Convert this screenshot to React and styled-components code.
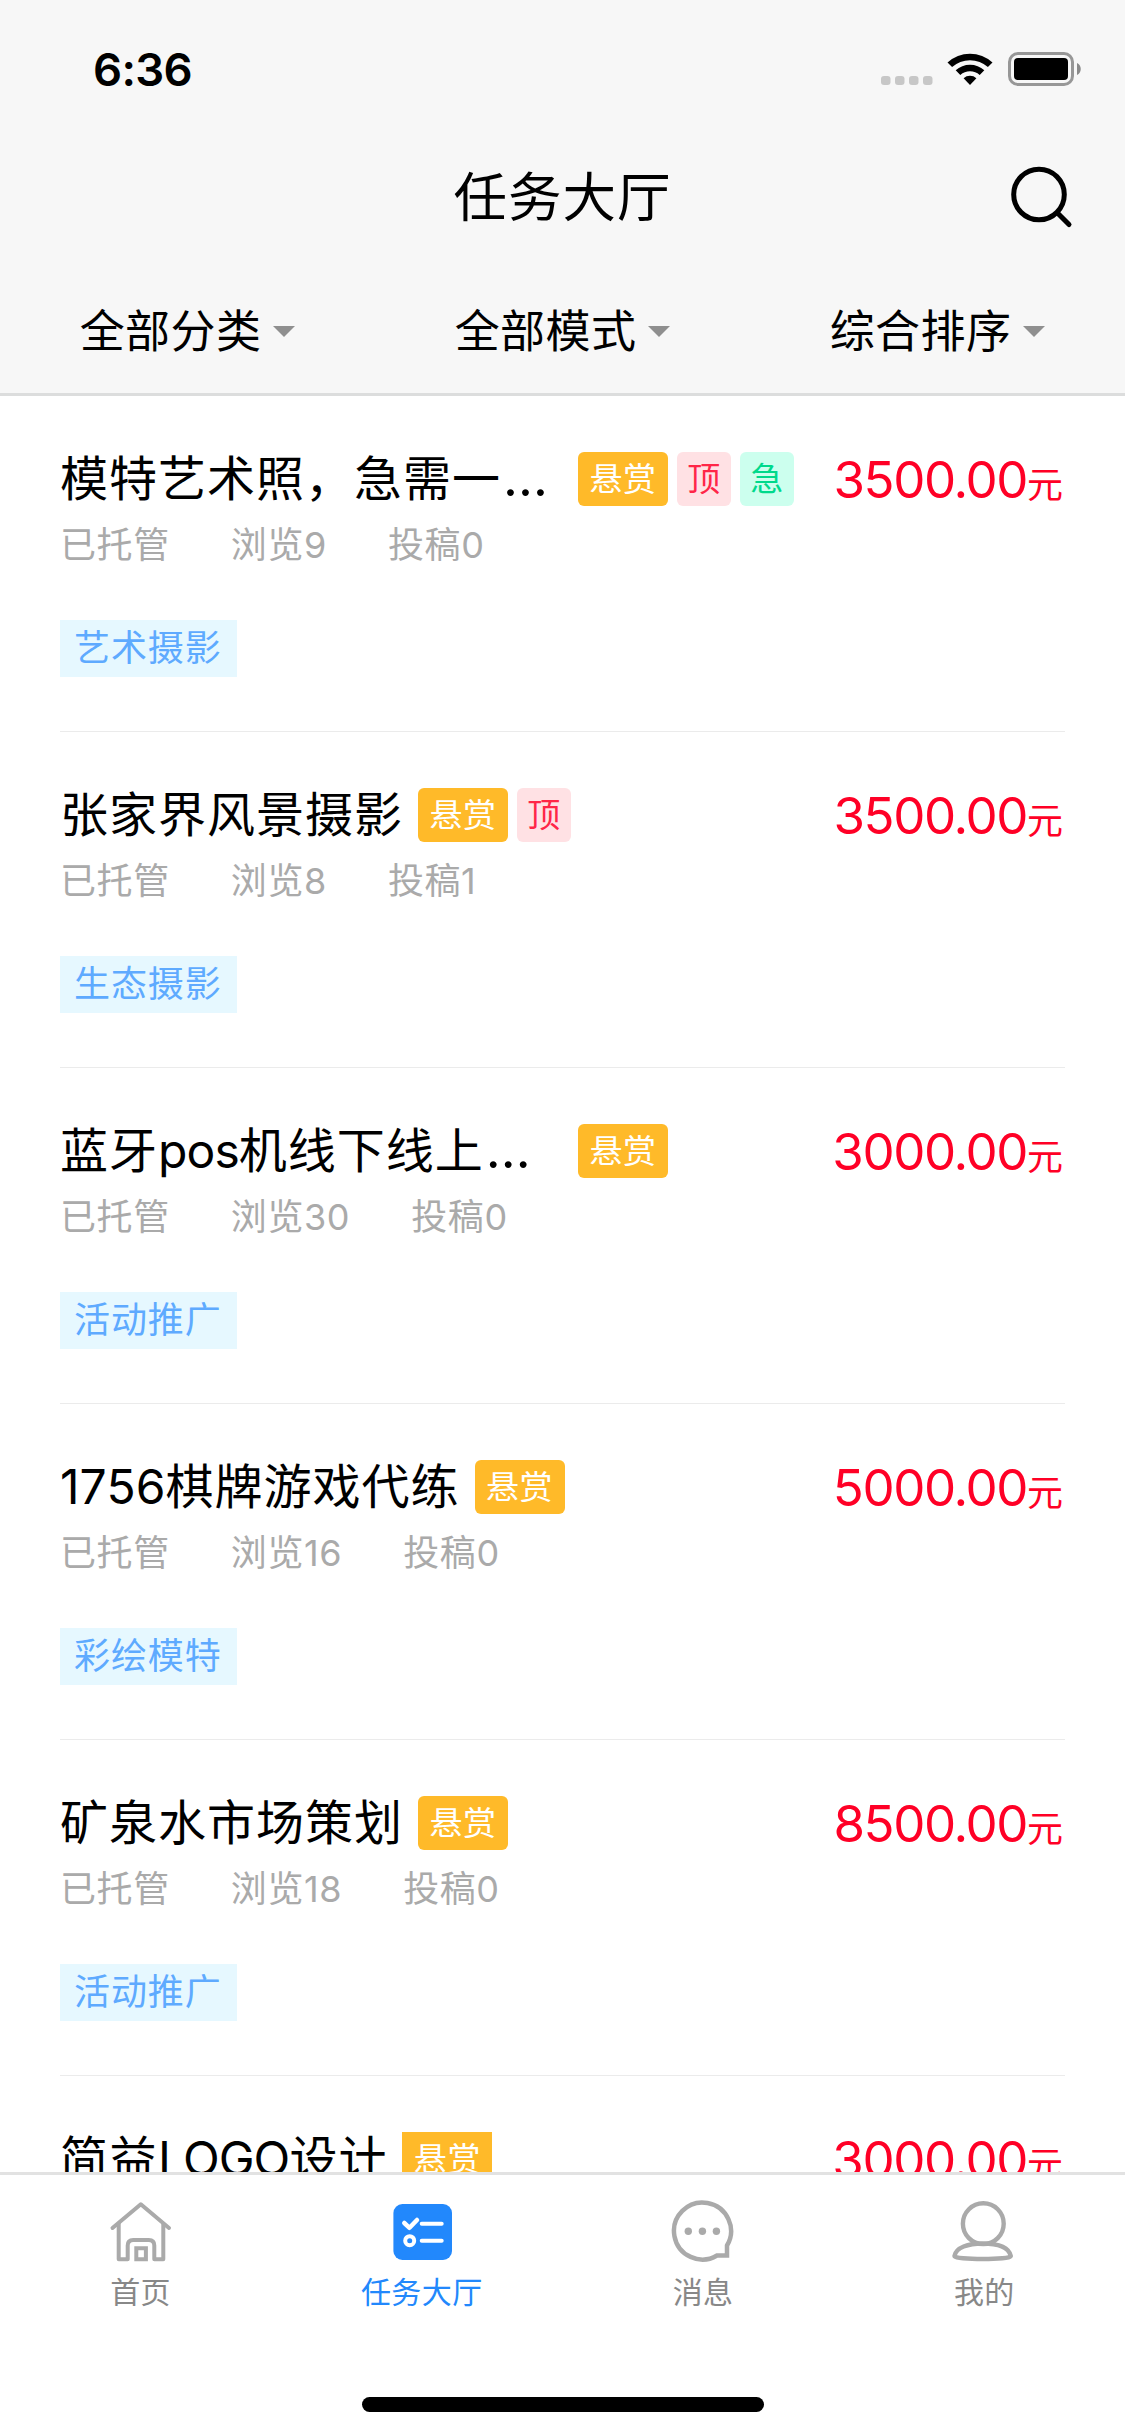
import React from "react";
import styled, { createGlobalStyle } from "styled-components";

const GlobalStyle = createGlobalStyle`
  * {
    box-sizing: border-box;
  }

  body {
    margin: 0;
    background: #fff;
    font-family: Inter, "Noto Sans CJK SC", sans-serif;
    color: #000;
  }
`;

const blue = "#2288fc";
const iconGrey = "#aaaaaa";

const TASKS = [
  {
    title: "模特艺术照，急需一…",
    badges: ["reward", "top", "urgent"],
    views: 9,
    entries: 0,
    tag: "艺术摄影",
    price: "3500.00",
  },
  {
    title: "张家界风景摄影",
    badges: ["reward", "top"],
    views: 8,
    entries: 1,
    tag: "生态摄影",
    price: "3500.00",
  },
  {
    title: "蓝牙pos机线下线上…",
    badges: ["reward"],
    views: 30,
    entries: 0,
    tag: "活动推广",
    price: "3000.00",
  },
  {
    title: "1756棋牌游戏代练",
    badges: ["reward"],
    views: 16,
    entries: 0,
    tag: "彩绘模特",
    price: "5000.00",
  },
  {
    title: "矿泉水市场策划",
    badges: ["reward"],
    views: 18,
    entries: 0,
    tag: "活动推广",
    price: "8500.00",
  },
  {
    title: "简益LOGO设计",
    badges: ["reward"],
    square: true,
    price: "3000.00",
  },
];

const BADGES = {
  reward: { label: "悬赏", color: "#ffffff", background: "#ffba29", width: 90 },
  top: { label: "顶", color: "#ff2647", background: "#ffe1e4", width: 54 },
  urgent: { label: "急", color: "#00d98b", background: "#ccffee", width: 54 },
};

const Screen = styled.div`
  width: 1125px;
  height: 2436px;
  display: flex;
  flex-direction: column;
  overflow: hidden;
  background: #fff;
`;

const Header = styled.header`
  height: 396px;
  flex: none;
  display: flex;
  flex-direction: column;
  background: #f7f7f7;
  border-bottom: 3px solid #dcdddd;
`;

const StatusBar = styled.div`
  height: 132px;
  display: flex;
  align-items: center;
  justify-content: space-between;
  padding: 6px 44px 0 93px;
`;

const Time = styled.span`
  font-size: 45.5px;
  font-weight: 600;
  letter-spacing: -0.7px;
`;

const StatusIcons = styled.div`
  display: flex;
  align-items: center;

  svg {
    display: block;
  }
`;

const TitleBar = styled.div`
  height: 132px;
  display: grid;
  grid-template-columns: 1fr auto 1fr;
  align-items: center;
  padding: 0 51px;
`;

const PageTitle = styled.h1`
  grid-column: 2;
  margin: 0;
  font-size: 53.5px;
  font-weight: 400;
  line-height: 80px;
  letter-spacing: 1px;
`;

const SearchButton = styled.button`
  justify-self: end;
  padding: 0;
  border: 0;
  background: none;

  svg {
    display: block;
  }
`;

const Filters = styled.nav`
  height: 129px;
  display: grid;
  grid-template-columns: repeat(3, 1fr);
`;

const Filter = styled.div`
  display: flex;
  align-items: center;
  justify-content: center;
  gap: 12px;
  padding-bottom: 1px;
  font-size: 45px;
  letter-spacing: 0.4px;
`;

const Caret = styled.i`
  border: 11px solid transparent;
  border-top-color: #8f8f8f;
  border-bottom: 0;
  margin-top: 6px;
`;

const List = styled.main`
  flex: 1;
  min-height: 0;
  overflow: hidden;
  padding: 0 60px;
`;

const Task = styled.article`
  height: 336px;
  display: flex;
  justify-content: space-between;
  padding-top: 56px;
  border-bottom: 1px solid #ebebeb;
`;

const TitleRow = styled.div`
  height: 54px;
  display: flex;
  align-items: center;
  gap: 9px;
`;

const TaskTitle = styled.h2`
  width: ${({ $clipped }) => ($clipped ? "503px" : "auto")};
  margin: 0 6px 0 0;
  font-size: 48px;
  font-weight: 400;
  line-height: 54px;
  letter-spacing: 1px;
  white-space: nowrap;
`;

const Latin = styled.span`
  letter-spacing: ${({ $digits }) => ($digits ? "0.1px" : "-0.9px")};
`;

const Ellipsis = styled.span`
  margin-left: 2px;
  font-size: 52px;
  line-height: 1;
`;

const Badge = styled.span`
  width: ${({ $kind }) => BADGES[$kind].width}px;
  height: 54px;
  border-radius: ${({ $square }) => ($square ? "0" : "6px")};
  background: ${({ $kind }) => BADGES[$kind].background};
  color: ${({ $kind }) => BADGES[$kind].color};
  font-size: 33px;
  line-height: 54px;
  letter-spacing: 0.6px;
  text-align: center;
`;

const Meta = styled.div`
  display: flex;
  gap: 61px;
  margin-top: 12px;
  font-size: 36px;
  line-height: 54px;
  letter-spacing: 0.6px;
  color: #aaaaaa;
`;

const Tag = styled.span`
  display: inline-block;
  width: 177px;
  height: 57px;
  margin-top: 48px;
  padding-left: 14px;
  background: #e6f8ff;
  color: #5eaaff;
  font-size: 36px;
  line-height: 57px;
  letter-spacing: 0.9px;
`;

const Price = styled.div`
  height: 58px;
  padding-right: 2px;
  line-height: 56px;
  font-size: 51px;
  letter-spacing: -1.4px;
  color: #ff0026;
  white-space: nowrap;
`;

const Unit = styled.span`
  font-size: 36px;
  letter-spacing: 0;
`;

const TabBar = styled.footer`
  height: 264px;
  flex: none;
  display: flex;
  flex-direction: column;
  align-items: center;
  justify-content: space-between;
  border-top: 3px solid #e2e2e2;
  background: #fff;
`;

const Tabs = styled.nav`
  width: 100%;
  display: grid;
  grid-template-columns: repeat(4, 1fr);
  padding-top: 25px;
`;

const Tab = styled.div`
  display: flex;
  flex-direction: column;
  align-items: center;
  color: ${({ $active }) => ($active ? blue : "#888888")};
  font-size: 30px;
  line-height: 44px;
  letter-spacing: 0.5px;

  svg {
    display: block;
    margin-bottom: 6px;
  }
`;

const HomeIndicator = styled.div`
  width: 402px;
  height: 15px;
  margin-bottom: 24px;
  border-radius: 8px;
  background: #000;
`;

const StatusGlyphs = () => (
  <svg width="200" height="36" viewBox="0 0 200 36">
    <g fill="#c7c7c7">
      <rect x="0" y="25" width="9.5" height="9" rx="3" />
      <rect x="14" y="25" width="9.5" height="9" rx="3" />
      <rect x="28" y="25" width="9.5" height="9" rx="3" />
      <rect x="42" y="25" width="9.5" height="9" rx="3" />
    </g>
    <path d="M66.5 11.5a33 33 0 0 1 45 0l-4.6 4.6a26.5 26.5 0 0 0-35.8 0z" />
    <path d="M74.7 19.3a21 21 0 0 1 28.6 0l-4.6 4.7a14.6 14.6 0 0 0-19.4 0z" />
    <path d="M82.6 27.2a9.5 9.5 0 0 1 12.8 0l-6.4 6.8z" />
    <rect x="128.5" y="2.5" width="63" height="31" rx="8.5" fill="none" stroke="#979797" strokeWidth="3" />
    <rect x="133" y="7" width="54" height="22" rx="4" />
    <path d="M196 12c5 2 5 10 0 12z" fill="#8a8a8a" />
  </svg>
);

const SearchIcon = () => (
  <svg width="64" height="64" viewBox="0 0 64 64" fill="none" stroke="#000" strokeWidth="5" strokeLinecap="round">
    <circle cx="29" cy="28.5" r="25.3" />
    <path d="M47.5 47l11.500 11.500" />
  </svg>
);

const HomeIcon = () => (
  <svg width="80" height="64" viewBox="0 0 80 64" fill="none" stroke={iconGrey} strokeWidth="4" strokeLinecap="round" strokeLinejoin="round">
    <path d="M11.5 28L39.8 4.3 68 28" />
    <path strokeLinecap="butt" d="M17.7 23v36.3h9V45.5q0-5.5 5.5-5.5h15.6q5.5 0 5.5 5.5v13.8h9V23" />
    <path strokeLinejoin="miter" d="M35.3 48.3h9.6v11h-9.6z" />
  </svg>
);

const TaskIcon = () => (
  <svg width="80" height="64" viewBox="0 0 80 64">
    <rect x="11.4" y="4" width="58.6" height="56" rx="9" fill={blue} />
    <g fill="none" stroke="#fff" strokeWidth="4" strokeLinecap="round" strokeLinejoin="round">
      <path strokeWidth="4.5" d="M22.3 23l5.2 4.8 7.5-7.8" />
      <path d="M39.7 23.7h20M39.7 40.7h20" />
      <circle cx="27.7" cy="40.7" r="4.5" />
    </g>
  </svg>
);

const MessageIcon = () => (
  <svg width="80" height="64" viewBox="0 0 80 64" fill="none" stroke={iconGrey} strokeWidth="4.5">
    <path d="M54 55.5A28.5 28.5 0 1 1 64 45.5V55.5z" />
    <g fill={iconGrey} stroke="none">
      <circle cx="25.3" cy="31.3" r="3.7" />
      <circle cx="39.4" cy="31.3" r="3.7" />
      <circle cx="53.4" cy="31.3" r="3.7" />
    </g>
  </svg>
);

const UserIcon = () => (
  <svg width="80" height="64" viewBox="0 0 80 64" fill="none" stroke={iconGrey} strokeWidth="4.4">
    <circle cx="39.3" cy="23.7" r="20.4" />
    <path d="M10.5 56C12 47.5 24 43.5 38.8 43.5s26 4 28 12.500C67.500 60 10 60 10.500 56z" />
  </svg>
);

const TABS = [
  { label: "首页", icon: <HomeIcon /> },
  { label: "任务大厅", icon: <TaskIcon />, active: true },
  { label: "消息", icon: <MessageIcon /> },
  { label: "我的", icon: <UserIcon /> },
];

// latin letters, digits and the ellipsis are spaced apart from the chinese text
const mixed = (text) =>
  text.split(/([A-Za-z]+|[0-9]+|…)/).map((run, i) => {
    if (run === "…") return <Ellipsis key={i}>{run}</Ellipsis>;
    if (i % 2 === 0) return run;
    return (
      <Latin key={i} $digits={/[0-9]/.test(run)}>
        {run}
      </Latin>
    );
  });

const TaskItem = ({ task }) => (
  <Task>
    <div>
      <TitleRow>
        <TaskTitle $clipped={task.title.endsWith("…")}>
          {mixed(task.title)}
        </TaskTitle>
        {task.badges.map((kind) => (
          <Badge key={kind} $kind={kind} $square={task.square}>
            {BADGES[kind].label}
          </Badge>
        ))}
      </TitleRow>
      {task.tag && (
        <>
          <Meta>
            <span>已托管</span>
            <span>浏览{task.views}</span>
            <span>投稿{task.entries}</span>
          </Meta>
          <Tag>{task.tag}</Tag>
        </>
      )}
    </div>
    <Price>
      {task.price}
      <Unit>元</Unit>
    </Price>
  </Task>
);

const App = () => {
  return (
    <Screen>
      <GlobalStyle />
      <Header>
        <StatusBar>
          <Time>6:36</Time>
          <StatusIcons>
            <StatusGlyphs />
          </StatusIcons>
        </StatusBar>
        <TitleBar>
          <PageTitle>任务大厅</PageTitle>
          <SearchButton>
            <SearchIcon />
          </SearchButton>
        </TitleBar>
        <Filters>
          {["全部分类", "全部模式", "综合排序"].map((label) => (
            <Filter key={label}>
              {label}
              <Caret />
            </Filter>
          ))}
        </Filters>
      </Header>
      <List>
        {TASKS.map((task) => (
          <TaskItem key={task.title} task={task} />
        ))}
      </List>
      <TabBar>
        <Tabs>
          {TABS.map(({ label, icon, active }) => (
            <Tab key={label} $active={active}>
              {icon}
              {label}
            </Tab>
          ))}
        </Tabs>
        <HomeIndicator />
      </TabBar>
    </Screen>
  );
};

export default App;
